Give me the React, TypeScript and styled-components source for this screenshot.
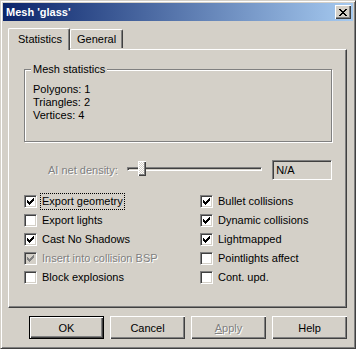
import { ReactElement } from "react";
import styled, { createGlobalStyle } from "styled-components";

const GlobalStyle = createGlobalStyle`
  body {
    margin: 0;
    background: #d4d0c8;
    font-family: "Liberation Sans", Arial, sans-serif;
    font-size: 11px;
  }
`;

const Window = styled.div`
  width: 356px;
  height: 349px;
  box-sizing: border-box;
  background: #d4d0c8;
  border: 1px solid;
  border-color: #d4d0c8 #404040 #404040 #d4d0c8;
  box-shadow: inset 1px 1px #ffffff, inset -1px -1px #808080;
  padding: 2px;
  display: flex;
  flex-direction: column;
`;

const TitleBar = styled.div`
  height: 18px;
  display: flex;
  align-items: center;
  justify-content: space-between;
  padding: 0 2px 0 3px;
  background: linear-gradient(to right, #0a246a, #a6caf0);
  color: #ffffff;
  font-weight: bold;
  font-size: 11px;
`;

const CloseButton = styled.div`
  width: 16px;
  height: 14px;
  box-sizing: border-box;
  background: #d4d0c8;
  box-shadow: inset 1px 1px #ffffff, inset -1px -1px #404040,
    inset -2px -2px #808080;
  display: flex;
  align-items: center;
  justify-content: center;
`;

const Body = styled.div`
  padding: 7px 6px 0 5px;
  display: flex;
  flex-direction: column;
`;

const TabStrip = styled.div`
  display: flex;
  align-items: flex-end;
  height: 21px;
  position: relative;
  z-index: 1;
`;

const Tab = styled.div<{ active?: boolean }>`
  box-sizing: border-box;
  height: ${(p) => (p.active ? "22px" : "19px")};
  margin-bottom: ${(p) => (p.active ? "-1px" : "1px")};
  padding: ${(p) => (p.active ? "3px 7px 0 9px" : "2px 6px 0 6px")};
  background: #d4d0c8;
  border-left: 1px solid #ffffff;
  border-top: 1px solid #ffffff;
  border-right: 1px solid #404040;
  box-shadow: inset -1px 0 #808080;
  border-radius: 2px 2px 0 0;
  font-size: 11px;
  line-height: 14px;
  color: #000000;
`;

const Panel = styled.div`
  height: 259px;
  box-sizing: border-box;
  background: #d4d0c8;
  border-left: 1px solid #ffffff;
  border-top: 1px solid #ffffff;
  border-right: 1px solid #404040;
  border-bottom: 1px solid #404040;
  box-shadow: inset -1px -1px #808080;
  padding: 19px 14px 0 15px;
  display: flex;
  flex-direction: column;
`;

const GroupBox = styled.div`
  position: relative;
  height: 73px;
  box-sizing: border-box;
  border: 1px solid #808080;
  box-shadow: inset 1px 1px #ffffff, 1px 1px #ffffff;
  padding: 13px 8px 0 8px;
  line-height: 13px;
`;

const Legend = styled.span`
  position: absolute;
  top: -7px;
  left: 6px;
  padding: 0 2px;
  background: #d4d0c8;
  line-height: 13px;
`;

const DensityRow = styled.div`
  margin-top: 18px;
  display: flex;
  align-items: center;
  height: 20px;
`;

const DisabledText = styled.span`
  color: #808080;
  text-shadow: 1px 1px #ffffff;
`;

const DensityLabel = styled(DisabledText)`
  margin-left: 24px;
  width: 79px;
`;

const Slider = styled.div`
  position: relative;
  width: 136px;
  height: 20px;
`;

const Track = styled.div`
  position: absolute;
  left: 0;
  right: 0;
  top: 7px;
  height: 4px;
  box-sizing: border-box;
  border-top: 1px solid #808080;
  border-left: 1px solid #808080;
  border-bottom: 1px solid #ffffff;
  border-right: 1px solid #ffffff;
  box-shadow: inset 1px 1px #404040;
`;

const Thumb = styled.div`
  position: absolute;
  left: 11px;
  top: 1px;
  width: 8px;
  height: 15px;
  box-sizing: border-box;
  background-color: #d4d0c8;
  background-image: repeating-conic-gradient(#ffffff 0 25%, #d4d0c8 0 50%);
  background-size: 2px 2px;
  box-shadow: inset 1px 1px #ffffff, inset -1px -1px #404040,
    inset -2px -2px #808080;
`;

const ValueBox = styled.div`
  margin-left: 10px;
  width: 60px;
  height: 20px;
  box-sizing: border-box;
  border: 1px solid;
  border-color: #808080 #ffffff #ffffff #808080;
  box-shadow: inset 1px 1px #404040, inset -1px -1px #d4d0c8;
  padding: 3px 0 0 3px;
  line-height: 13px;
`;

const Options = styled.div`
  margin-top: 12px;
  display: grid;
  grid-template-columns: 176px 1fr;
  grid-auto-rows: 19px;
`;

const OptionRow = styled.div`
  display: flex;
  align-items: center;
  gap: 4px;
`;

const Box = styled.div<{ disabled?: boolean }>`
  width: 13px;
  height: 13px;
  box-sizing: border-box;
  background: ${(p) => (p.disabled ? "#d4d0c8" : "#ffffff")};
  border: 1px solid;
  border-color: #808080 #ffffff #ffffff #808080;
  box-shadow: inset 1px 1px #404040, inset -1px -1px #d4d0c8;
  display: flex;
  padding: 2px 0 0 2px;
  flex-shrink: 0;
`;

const Label = styled.span<{ focused?: boolean }>`
  padding: 1px 1px;
  line-height: 13px;
  outline: ${(p) => (p.focused ? "1px dotted #000000" : "none")};
`;

const ButtonRow = styled.div`
  display: flex;
  gap: 6px;
  margin-top: 8px;
  padding-left: 21px;
`;

const Button = styled.div<{ primary?: boolean }>`
  width: 75px;
  height: 23px;
  box-sizing: border-box;
  display: flex;
  align-items: center;
  justify-content: center;
  background: #d4d0c8;
  border: ${(p) => (p.primary ? "1px solid #000000" : "none")};
  box-shadow: inset 1px 1px #ffffff, inset -1px -1px #404040,
    inset -2px -2px #808080;
`;

function Check({ color }: { color: string }): ReactElement {
  const cols = [2, 3, 4, 3, 2, 1, 0];
  return (
    <svg width="7" height="7" viewBox="0 0 7 7" shapeRendering="crispEdges">
      {cols.map((top, i) => (
        <rect key={i} x={i} y={top} width="1" height="3" fill={color} />
      ))}
    </svg>
  );
}

interface OptionProps {
  label: string;
  checked?: boolean;
  disabled?: boolean;
  focused?: boolean;
}

function Option({ label, checked, disabled, focused }: OptionProps): ReactElement {
  return (
    <OptionRow>
      <Box disabled={disabled}>
        {checked && <Check color={disabled ? "#808080" : "#000000"} />}
      </Box>
      <Label focused={focused}>
        {disabled ? <DisabledText>{label}</DisabledText> : label}
      </Label>
    </OptionRow>
  );
}

export default function App(): ReactElement {
  return (
    <Window>
      <GlobalStyle />
      <TitleBar>
        <span>Mesh 'glass'</span>
        <CloseButton>
          <svg width="8" height="7" viewBox="0 0 8 7" shapeRendering="crispEdges">
            <path
              d="M0 0h2v1h-2zM6 0h2v1h-2zM1 1h2v1h-2zM5 1h2v1h-2zM2 2h4v1h-4zM3 3h2v1h-2zM2 4h4v1h-4zM1 5h2v1h-2zM5 5h2v1h-2zM0 6h2v1h-2zM6 6h2v1h-2z"
              fill="#000000"
            />
          </svg>
        </CloseButton>
      </TitleBar>
      <Body>
        <TabStrip>
          <Tab active>Statistics</Tab>
          <Tab>General</Tab>
        </TabStrip>
        <Panel>
          <GroupBox>
            <Legend>Mesh statistics</Legend>
            <div>Polygons: 1</div>
            <div>Triangles: 2</div>
            <div>Vertices: 4</div>
          </GroupBox>
          <DensityRow>
            <DensityLabel>AI net density:</DensityLabel>
            <Slider>
              <Track />
              <Thumb />
            </Slider>
            <ValueBox>N/A</ValueBox>
          </DensityRow>
          <Options>
            <Option label="Export geometry" checked focused />
            <Option label="Bullet collisions" checked />
            <Option label="Export lights" />
            <Option label="Dynamic collisions" checked />
            <Option label="Cast No Shadows" checked />
            <Option label="Lightmapped" checked />
            <Option label="Insert into collision BSP" checked disabled />
            <Option label="Pointlights affect" />
            <Option label="Block explosions" />
            <Option label="Cont. upd." />
          </Options>
        </Panel>
        <ButtonRow>
          <Button primary>OK</Button>
          <Button>Cancel</Button>
          <Button>
            <DisabledText>
              <u>A</u>pply
            </DisabledText>
          </Button>
          <Button>Help</Button>
        </ButtonRow>
      </Body>
    </Window>
  );
}
